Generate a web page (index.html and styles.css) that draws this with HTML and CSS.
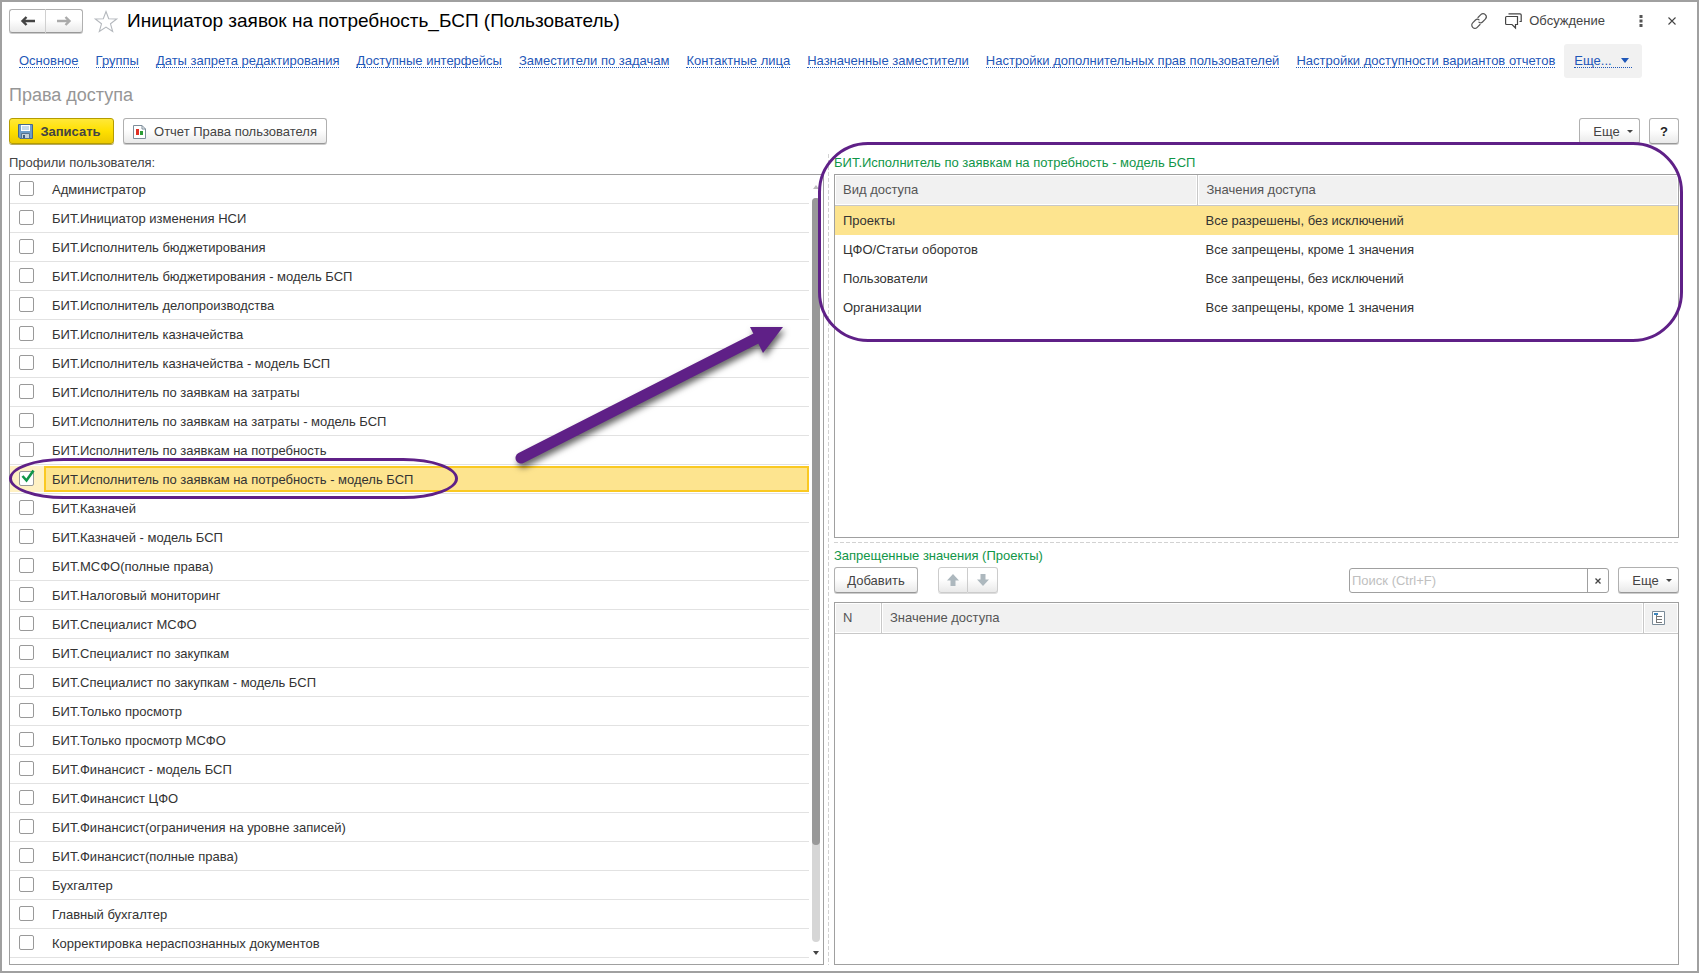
FILE: index.html
```html
<!DOCTYPE html>
<html lang="ru">
<head>
<meta charset="utf-8">
<title>Инициатор заявок на потребность_БСП (Пользователь)</title>
<link rel="stylesheet" href="styles.css">
</head>
<body>
<div class="window">
  <header class="titlebar">
    <div class="btn-pair">
      <button class="btn pair-item" aria-label="Назад"><svg width="14" height="12" viewBox="0 0 14 12"><path d="M5.500 2L1.500 6L5.500 10M2 6H14" fill="none" stroke="#444" stroke-width="2.400"/></svg></button>
      <button class="btn pair-item" aria-label="Вперед"><svg width="14" height="12" viewBox="0 0 14 12"><path d="M8.500 2L12.500 6L8.500 10M12 6H0" fill="none" stroke="#aaa" stroke-width="2.400"/></svg></button>
    </div>
    <button class="icon-btn star" aria-label="В избранное"><svg width="24" height="23" viewBox="0 0 24 23"><path d="M12 1.500L14.700 8.700L22.700 9L16.500 13.800L18.700 21.500L12 17.100L5.300 21.500L7.500 13.800L1.300 9L9.300 8.700Z" fill="#fff" stroke="#b4b8bd" stroke-width="1.100"/></svg></button>
    <h1 class="title">Инициатор заявок на потребность_БСП (Пользователь)</h1>
    <div class="title-tools">
      <button class="icon-btn" aria-label="Ссылка"><svg width="16" height="16" viewBox="0 0 16 16" fill="none" stroke="#555" stroke-width="1.200" stroke-linecap="round"><path d="M7 4.500L9.800 1.700A2.700 2.700 0 0 1 14.300 6.200L11.500 9A2.700 2.700 0 0 1 8 9.200M9 11.500L6.200 14.300A2.700 2.700 0 0 1 1.700 9.800L4.500 7A2.700 2.700 0 0 1 8 6.800"/></svg></button>
      <button class="icon-btn discuss"><svg width="17" height="16" viewBox="0 0 17 16" fill="none" stroke="#444" stroke-width="1.200"><path d="M1.500 3.500H12.500V11.500H10.500V15L7 11.500H1.500Q.6 11.500 .6 10.500V4.500Q.6 3.500 1.500 3.500ZM3.500 .8H15Q16.200 .8 16.200 2V8.500H14.500"/></svg><span>Обсуждение</span></button>
      <button class="icon-btn dots" aria-label="Меню"><svg width="4" height="12" viewBox="0 0 4 12" fill="#555"><rect width="3" height="3" x=".5" y="0"/><rect width="3" height="3" x=".5" y="4.500"/><rect width="3" height="3" x=".5" y="9"/></svg></button>
      <button class="icon-btn" aria-label="Закрыть"><svg width="8" height="8" viewBox="0 0 8 8"><path d="M.5 .5L7.500 7.500M7.500 .5L.5 7.500" stroke="#444" stroke-width="1.100"/></svg></button>
    </div>
  </header>

  <nav class="links">
    <a href="#">Основное</a>
    <a href="#">Группы</a>
    <a href="#">Даты запрета редактирования</a>
    <a href="#">Доступные интерфейсы</a>
    <a href="#">Заместители по задачам</a>
    <a href="#">Контактные лица</a>
    <a href="#">Назначенные заместители</a>
    <a href="#">Настройки дополнительных прав пользователей</a>
    <a href="#">Настройки доступности вариантов отчетов</a>
    <span class="more-box"><a href="#">Еще...<svg class="more-caret" width="8" height="5" viewBox="0 0 8 5"><path d="M0 0H8L4 5Z" fill="#1f57b8"/></svg></a></span>
  </nav>

  <h2 class="subtitle">Права доступа</h2>

  <div class="toolbar">
    <button class="btn primary"><svg width="15" height="15" viewBox="0 0 15 15"><path d="M.5 .5H14.500V14.500H2L.5 13Z" fill="#6d9cc8" stroke="#45698f"/><path d="M3 1H12V7H3Z" fill="#fff"/><path d="M4 3H11M4 5H11" stroke="#8eb4d4"/><path d="M3.500 9.500H11.500V14.500H3.500Z" fill="#c6d0d8" stroke="#56748f"/><path d="M5 11H7V14H5Z" fill="#3e5f80"/></svg>Записать</button>
    <button class="btn report"><svg width="13" height="14" viewBox="0 0 13 14"><path d="M.5 .5H9L12.500 4V13.500H.5Z" fill="#fff" stroke="#7d8d9a"/><path d="M9 .5V4H12.500" fill="none" stroke="#7d8d9a"/><path d="M3 4H6V10H3Z" fill="#e02f24"/><path d="M7 6H10V10H7Z" fill="#2c9c36"/></svg>Отчет Права пользователя</button>
    <button class="btn more push">Еще<i class="caret"></i></button>
    <button class="btn help" aria-label="Справка">?</button>
  </div>

  <main class="panes">
    <section class="pane-left">
      <div class="caption">Профили пользователя:</div>
      <div class="list-box">
        <ul class="profiles">
          <li><label><input type="checkbox"><span>Администратор</span></label></li>
          <li><label><input type="checkbox"><span>БИТ.Инициатор изменения НСИ</span></label></li>
          <li><label><input type="checkbox"><span>БИТ.Исполнитель бюджетирования</span></label></li>
          <li><label><input type="checkbox"><span>БИТ.Исполнитель бюджетирования - модель БСП</span></label></li>
          <li><label><input type="checkbox"><span>БИТ.Исполнитель делопроизводства</span></label></li>
          <li><label><input type="checkbox"><span>БИТ.Исполнитель казначейства</span></label></li>
          <li><label><input type="checkbox"><span>БИТ.Исполнитель казначейства - модель БСП</span></label></li>
          <li><label><input type="checkbox"><span>БИТ.Исполнитель по заявкам на затраты</span></label></li>
          <li><label><input type="checkbox"><span>БИТ.Исполнитель по заявкам на затраты - модель БСП</span></label></li>
          <li><label><input type="checkbox"><span>БИТ.Исполнитель по заявкам на потребность</span></label></li>
          <li class="selected"><label><input type="checkbox" checked><span>БИТ.Исполнитель по заявкам на потребность - модель БСП</span></label>
            <svg class="tick" width="14" height="14" viewBox="0 0 14 14"><path d="M1.500 7L5.500 11.500L12.500 1.500" fill="none" stroke="#109648" stroke-width="2.600"/></svg>
            <div class="row-ring"></div></li>
          <li><label><input type="checkbox"><span>БИТ.Казначей</span></label></li>
          <li><label><input type="checkbox"><span>БИТ.Казначей - модель БСП</span></label></li>
          <li><label><input type="checkbox"><span>БИТ.МСФО(полные права)</span></label></li>
          <li><label><input type="checkbox"><span>БИТ.Налоговый мониторинг</span></label></li>
          <li><label><input type="checkbox"><span>БИТ.Специалист МСФО</span></label></li>
          <li><label><input type="checkbox"><span>БИТ.Специалист по закупкам</span></label></li>
          <li><label><input type="checkbox"><span>БИТ.Специалист по закупкам - модель БСП</span></label></li>
          <li><label><input type="checkbox"><span>БИТ.Только просмотр</span></label></li>
          <li><label><input type="checkbox"><span>БИТ.Только просмотр МСФО</span></label></li>
          <li><label><input type="checkbox"><span>БИТ.Финансист - модель БСП</span></label></li>
          <li><label><input type="checkbox"><span>БИТ.Финансист ЦФО</span></label></li>
          <li><label><input type="checkbox"><span>БИТ.Финансист(ограничения на уровне записей)</span></label></li>
          <li><label><input type="checkbox"><span>БИТ.Финансист(полные права)</span></label></li>
          <li><label><input type="checkbox"><span>Бухгалтер</span></label></li>
          <li><label><input type="checkbox"><span>Главный бухгалтер</span></label></li>
          <li><label><input type="checkbox"><span>Корректировка нераспознанных документов</span></label></li>
        </ul>
        <div class="scroll">
          <svg width="6" height="4" viewBox="0 0 6 4"><path d="M0 4H6L3 0Z" fill="#bbb"/></svg>
          <div class="track"><div class="thumb"></div></div>
          <svg width="6" height="4" viewBox="0 0 6 4"><path d="M0 0H6L3 4Z" fill="#444"/></svg>
        </div>
        <svg class="arrow" width="280" height="160" viewBox="0 0 280 160"><path d="M21 143L259 22" stroke="#5f2087" stroke-width="11" stroke-linecap="round"/><path d="M250 12H283L263 38Z" fill="#5f2087"/></svg>
      </div>
    </section>

    <div class="splitter-v"></div>

    <section class="pane-right">
      <div class="access">
        <div class="caption green">БИТ.Исполнитель по заявкам на потребность - модель БСП</div>
        <div class="table-box">
          <table class="grid">
            <colgroup><col class="col-kind"><col></colgroup>
            <thead><tr><th>Вид доступа</th><th>Значения доступа</th></tr></thead>
            <tbody>
              <tr class="current"><td>Проекты</td><td>Все разрешены, без исключений</td></tr>
              <tr><td>ЦФО/Статьи оборотов</td><td>Все запрещены, кроме 1 значения</td></tr>
              <tr><td>Пользователи</td><td>Все запрещены, без исключений</td></tr>
              <tr><td>Организации</td><td>Все запрещены, кроме 1 значения</td></tr>
            </tbody>
          </table>
        </div>
        <div class="access-ring"></div>
      </div>

      <div class="splitter-h"></div>

      <div class="denied">
        <div class="caption green">Запрещенные значения (Проекты)</div>
        <div class="toolbar small">
          <button class="btn add">Добавить</button>
          <div class="btn-pair moves">
            <button class="btn pair-item" disabled aria-label="Вверх"><svg width="12" height="12" viewBox="0 0 12 12"><path d="M6 0L12 6.500H8.500V12H3.500V6.500H0Z" fill="#adb8be"/></svg></button>
            <button class="btn pair-item" disabled aria-label="Вниз"><svg width="12" height="12" viewBox="0 0 12 12"><path d="M6 12L12 5.500H8.500V0H3.500V5.500H0Z" fill="#adb8be"/></svg></button>
          </div>
          <div class="search push">
            <input type="text" placeholder="Поиск (Ctrl+F)" aria-label="Поиск">
            <button aria-label="Очистить"><svg width="6" height="6" viewBox="0 0 6 6"><path d="M.5 .5L5.500 5.500M5.500 .5L.5 5.500" stroke="#444" stroke-width="1.300"/></svg></button>
          </div>
          <button class="btn more">Еще<i class="caret"></i></button>
        </div>
        <div class="table-box">
          <table class="grid">
            <colgroup><col class="col-n"><col><col class="col-tool"></colgroup>
            <thead><tr><th>N</th><th>Значение доступа</th><th><svg width="13" height="14" viewBox="0 0 13 14"><path d="M.5 .5H12.500V13.500H.5Z" fill="#fff" stroke="#7b8c99"/><path d="M2 2H6V4H2Z" fill="#3d86bd"/><path d="M4.500 4V12M5 5.500H10M5 8.500H10M5 11.500H10" stroke="#777" fill="none"/></svg></th></tr></thead>
          </table>
        </div>
      </div>
    </section>
  </main>
</div>
</body>
</html>
```
FILE: styles.css
```css
* { box-sizing: border-box; }

body {
  margin: 0;
  font: 13px/16px "Liberation Sans", Arial, sans-serif;
  color: #333;
  background: #fff;
}

h1, h2, ul { margin: 0; padding: 0; font-weight: normal; }
button, input { font: inherit; color: inherit; }
svg { display: block; flex: none; overflow: visible; }

.window {
  display: flex;
  flex-direction: column;
  min-height: 100vh;
  border: 2px solid #a0a0a0;
  padding: 6px 18px 6px 7px;
}

/* Buttons */
.btn {
  display: flex;
  align-items: center;
  justify-content: center;
  height: 26px;
  padding: 1px 0 0;
  border: 1px solid #b0b0b0;
  border-bottom-color: #989898;
  border-radius: 3px;
  background: linear-gradient(#fff 45%, #e9e9e9);
  box-shadow: 0 1px 0 #ccc;
  color: #444;
}
.icon-btn {
  display: flex;
  align-items: center;
  padding: 0;
  border: 0;
  background: none;
  color: #444;
}
.btn-pair { display: flex; }
.pair-item { width: 37px; height: 24px; padding: 0; }
.pair-item:first-child { border-radius: 3px 0 0 3px; border-right-color: #d0d0d0; }
.pair-item:last-child { border-radius: 0 3px 3px 0; border-left: 0; }
.push { margin-left: auto; }
.caret {
  margin-left: 7px;
  border: 3px solid transparent;
  border-top-color: #444;
  border-bottom: 0;
}

/* Title bar */
.titlebar { display: flex; align-items: center; height: 26px; }
.star { margin-left: 11px; }
.title { margin-left: 9px; font-size: 19px; line-height: 24px; color: #000; }
.title-tools { display: flex; align-items: center; margin-left: auto; padding-right: 3px; }
.discuss { gap: 7px; margin-left: 18px; }
.dots { margin: 0 25px 0 34px; }

/* Section links */
.links { display: flex; align-items: center; gap: 17px; margin-top: 10px; padding-left: 10px; white-space: nowrap; }
.links a {
  line-height: 12px;
  color: #1f57b8;
  text-decoration: none;
  border-bottom: 1px dotted #1f57b8;
}
.more-box {
  display: flex;
  align-items: center;
  height: 34px;
  margin-left: -8px;
  padding: 0 10px;
  border-radius: 3px;
  background: #f1f1f1;
}
.more-box a { display: flex; align-items: center; gap: 9px; padding-right: 3px; }

.subtitle { margin-top: 6px; font-size: 18px; line-height: 22px; color: #969696; }

/* Command bar */
.toolbar { display: flex; margin-top: 12px; gap: 9px; }
.primary {
  width: 105px;
  gap: 7px;
  padding-right: 4px;
  background: linear-gradient(#ffe838, #ffe000 50%, #ecc900);
  border-color: #b49c00;
  box-shadow: 0 1px 0 #b4a860;
  font-weight: bold;
}
.report { gap: 8px; width: 204px; }
.more { width: 61px; padding-left: 7px; }
.help { width: 30px; font-weight: bold; color: #222; }

/* Panes */
.panes { display: flex; flex: 1; margin-top: 10px; }
.pane-left { display: flex; flex-direction: column; flex: 815 1 0; min-width: 0; }
.pane-right { display: flex; flex-direction: column; flex: 845 1 0; min-width: 0; }
.caption { height: 20px; line-height: 17px; color: #444; white-space: nowrap; }
.green { color: #109648; }
.splitter-v {
  width: 1px;
  margin: 0 5px 0 4px;
  background: repeating-linear-gradient(#d2d2d2 0 4px, transparent 4px 6px);
}
.splitter-h {
  height: 1px;
  margin: 4px 0;
  background: repeating-linear-gradient(90deg, #d2d2d2 0 4px, transparent 4px 6px);
}

/* Profile list */
.list-box { position: relative; display: flex; flex: 1; border: 1px solid #a0a0a0; }
.profiles { flex: 1; padding-bottom: 6px; list-style: none; }
.profiles li { position: relative; height: 29px; border-bottom: 1px solid #e2e2e2; }
.profiles label { display: flex; height: 28px; padding-left: 9px; }
.profiles input {
  appearance: none;
  width: 15px;
  height: 15px;
  margin: 6px 10px 0 0;
  border: 1px solid #999;
  border-radius: 2px;
  background: #fff;
}
.profiles span { flex: 1; padding-left: 8px; line-height: 30px; }
.profiles .selected label {
  padding-top: 1px;
  padding-bottom: 1px;
  background: linear-gradient(#fff1c4, #fff1c4) 0 1px / 100% 26px no-repeat;
}
.profiles .selected input { margin-top: 5px; }
.profiles .selected span {
  padding-left: 6px;
  line-height: 24px;
  border: 2px solid #fac922;
  background: #fde48f;
}
.tick { position: absolute; left: 11px; top: 4px; }
.row-ring {
  position: absolute;
  left: -1px;
  top: -7px;
  width: 449px;
  height: 41px;
  border: 3px solid #5f2087;
  border-radius: 56px / 21px;
}
.scroll {
  display: flex;
  flex-direction: column;
  align-items: center;
  width: 8px;
  margin: 10px 3px 9px;
  gap: 9px;
}
.track { flex: 1; width: 8px; border-radius: 4px; background: #d6d6d6; }
.thumb { height: 87%; border-radius: 4px; background: #999; }
.arrow {
  position: absolute;
  left: 490px;
  top: 140px;
  filter: drop-shadow(2px 4px 3px rgba(0, 0, 0, 0.6));
}

/* Tables */
.access { position: relative; display: flex; flex-direction: column; flex: 384 1 0; }
.denied { display: flex; flex-direction: column; flex: 418 1 0; }
.table-box { flex: 1; border: 1px solid #a0a0a0; }
.grid { width: 100%; table-layout: fixed; border-collapse: separate; border-spacing: 0; }
.grid th {
  height: 31px;
  padding: 0 8px;
  text-align: left;
  font-weight: normal;
  color: #555;
  background: #f1f1f1;
  border-bottom: 1px solid #c8c8c8;
  box-shadow: inset 0 0 0 1px #fff;
}
.grid th + th { border-left: 1px solid #c8c8c8; }
.grid td { height: 29px; padding: 0 8px; }
.current td { background: #fde48f; }
.col-kind { width: 43%; }
.col-n { width: 46px; }
.col-tool { width: 35px; }
.access-ring {
  position: absolute;
  z-index: 2;
  left: -16px;
  right: -4px;
  top: -12px;
  height: 200px;
  border: 3px solid #5f2087;
  border-radius: 50px;
}

/* Denied values commands */
.denied .caption { line-height: 18px; }
.small { margin-top: 0; margin-bottom: 9px; }
.add { width: 84px; }
.moves { margin-left: 11px; }
.moves .btn { width: 30px; height: 26px; border-color: #ccc; box-shadow: 0 1px 0 #ddd; }
.search {
  display: flex;
  width: 260px;
  height: 25px;
  margin-top: 1px;
  border: 1px solid #a0a0a0;
  border-radius: 3px;
}
.search input { flex: 1; min-width: 0; padding: 0 2px; border: 0; background: none; }
.search input::placeholder { color: #c0c0c0; opacity: 1; }
.search button {
  display: flex;
  align-items: center;
  justify-content: center;
  width: 21px;
  padding: 0;
  border: 0;
  border-left: 1px solid #a0a0a0;
  background: none;
}
```
